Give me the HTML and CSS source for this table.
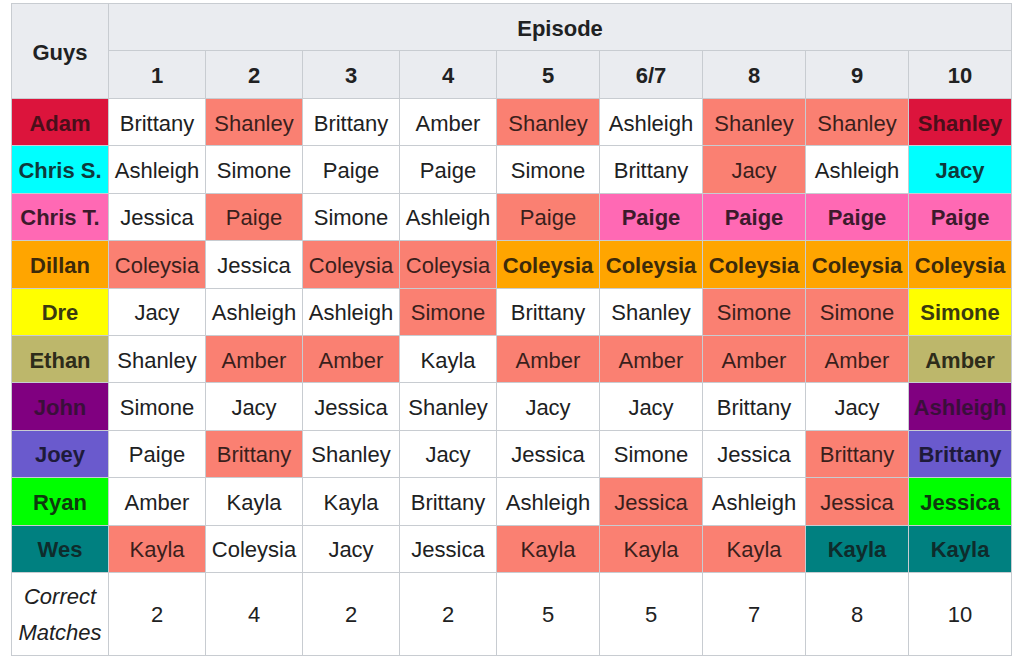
FILE: index.html
```html
<!DOCTYPE html>
<html>
<head>
<meta charset="utf-8">
<link rel="stylesheet" href="styles.css">
</head>
<body>
<table class="matches">
  <colgroup>
    <col class="c-narrow"><col class="c-narrow"><col class="c-narrow"><col class="c-narrow"><col class="c-narrow">
    <col class="c-wide"><col class="c-wide"><col class="c-wide"><col class="c-wide"><col class="c-wide">
  </colgroup>
  <thead>
    <tr class="h1">
      <th rowspan="2">Guys</th>
      <th colspan="9">Episode</th>
    </tr>
    <tr class="h2">
      <th>1</th><th>2</th><th>3</th><th>4</th><th>5</th><th>6/7</th><th>8</th><th>9</th><th>10</th>
    </tr>
  </thead>
  <tbody>
    <tr>
      <th class="crimson">Adam</th>
      <td>Brittany</td><td class="s">Shanley</td><td>Brittany</td><td>Amber</td><td class="s">Shanley</td><td>Ashleigh</td><td class="s">Shanley</td><td class="s">Shanley</td><td class="crimson b">Shanley</td>
    </tr>
    <tr>
      <th class="cyan">Chris S.</th>
      <td>Ashleigh</td><td>Simone</td><td>Paige</td><td>Paige</td><td>Simone</td><td>Brittany</td><td class="s">Jacy</td><td>Ashleigh</td><td class="cyan b">Jacy</td>
    </tr>
    <tr>
      <th class="pink">Chris T.</th>
      <td>Jessica</td><td class="s">Paige</td><td>Simone</td><td>Ashleigh</td><td class="s">Paige</td><td class="pink b">Paige</td><td class="pink b">Paige</td><td class="pink b">Paige</td><td class="pink b">Paige</td>
    </tr>
    <tr>
      <th class="orange">Dillan</th>
      <td class="s">Coleysia</td><td>Jessica</td><td class="s">Coleysia</td><td class="s">Coleysia</td><td class="orange b">Coleysia</td><td class="orange b">Coleysia</td><td class="orange b">Coleysia</td><td class="orange b">Coleysia</td><td class="orange b">Coleysia</td>
    </tr>
    <tr>
      <th class="yellow">Dre</th>
      <td>Jacy</td><td>Ashleigh</td><td>Ashleigh</td><td class="s">Simone</td><td>Brittany</td><td>Shanley</td><td class="s">Simone</td><td class="s">Simone</td><td class="yellow b">Simone</td>
    </tr>
    <tr>
      <th class="khaki">Ethan</th>
      <td>Shanley</td><td class="s">Amber</td><td class="s">Amber</td><td>Kayla</td><td class="s">Amber</td><td class="s">Amber</td><td class="s">Amber</td><td class="s">Amber</td><td class="khaki b">Amber</td>
    </tr>
    <tr>
      <th class="purple">John</th>
      <td>Simone</td><td>Jacy</td><td>Jessica</td><td>Shanley</td><td>Jacy</td><td>Jacy</td><td>Brittany</td><td>Jacy</td><td class="purple b">Ashleigh</td>
    </tr>
    <tr>
      <th class="slate">Joey</th>
      <td>Paige</td><td class="s">Brittany</td><td>Shanley</td><td>Jacy</td><td>Jessica</td><td>Simone</td><td>Jessica</td><td class="s">Brittany</td><td class="slate b">Brittany</td>
    </tr>
    <tr>
      <th class="lime">Ryan</th>
      <td>Amber</td><td>Kayla</td><td>Kayla</td><td>Brittany</td><td>Ashleigh</td><td class="s">Jessica</td><td>Ashleigh</td><td class="s">Jessica</td><td class="lime b">Jessica</td>
    </tr>
    <tr>
      <th class="teal">Wes</th>
      <td class="s">Kayla</td><td>Coleysia</td><td>Jacy</td><td>Jessica</td><td class="s">Kayla</td><td class="s">Kayla</td><td class="s">Kayla</td><td class="teal b">Kayla</td><td class="teal b">Kayla</td>
    </tr>
    <tr class="total">
      <td class="label">Correct<br>Matches</td>
      <td>2</td><td>4</td><td>2</td><td>2</td><td>5</td><td>5</td><td>7</td><td>8</td><td>10</td>
    </tr>
  </tbody>
</table>
</body>
</html>
```

FILE: styles.css
```css
html, body {
  margin: 0;
  padding: 0;
  background: #ffffff;
}

body {
  padding: 3px 0 0 11px;
  font-family: "Liberation Sans", Arial, sans-serif;
  color: #202122;
}

.matches {
  border-collapse: collapse;
  table-layout: fixed;
  width: 1001px;
  font-size: 22px;
}

.c-narrow { width: 97px; }
.c-wide { width: 103px; }

.matches th,
.matches td {
  border: 1px solid #c8ccd1;
  text-align: center;
  vertical-align: middle;
  padding: 3px 0 0 0;
  white-space: nowrap;
  overflow: hidden;
}

.matches thead th {
  background: #eaecf0;
  font-weight: bold;
}

.h1 { height: 47px; }
.h2 { height: 48px; }

.matches tbody tr { height: 47.4px; }

.matches tbody th {
  font-weight: bold;
  color: rgba(32, 33, 34, 0.85);
}

.matches td { background: #ffffff; }

.matches td.s { background: #fa8072; color: #3a1f1c; }

.b { font-weight: bold; color: rgba(32, 33, 34, 0.85); }

.matches .crimson { background: #dc143c; color: #4a0f1a; }
.matches .cyan { background: #00ffff; color: #0e3a3c; }
.matches .pink { background: #ff69b4; color: #3c1a2c; }
.matches .orange { background: #ffa500; color: #3c2a0a; }
.matches .yellow { background: #ffff00; color: #3a3a10; }
.matches .khaki { background: #bdb76b; color: #2e2c1a; }
.matches .purple { background: #800080; color: #3a0f3a; }
.matches .slate { background: #6a5acd; color: #1e1a3a; }
.matches .lime { background: #00ff00; color: #0e3a0e; }
.matches .teal { background: #008080; color: #0e2c2c; }

.matches tr.total { height: 83px; }

.matches td.label {
  font-style: italic;
  line-height: 36px;
}
```
